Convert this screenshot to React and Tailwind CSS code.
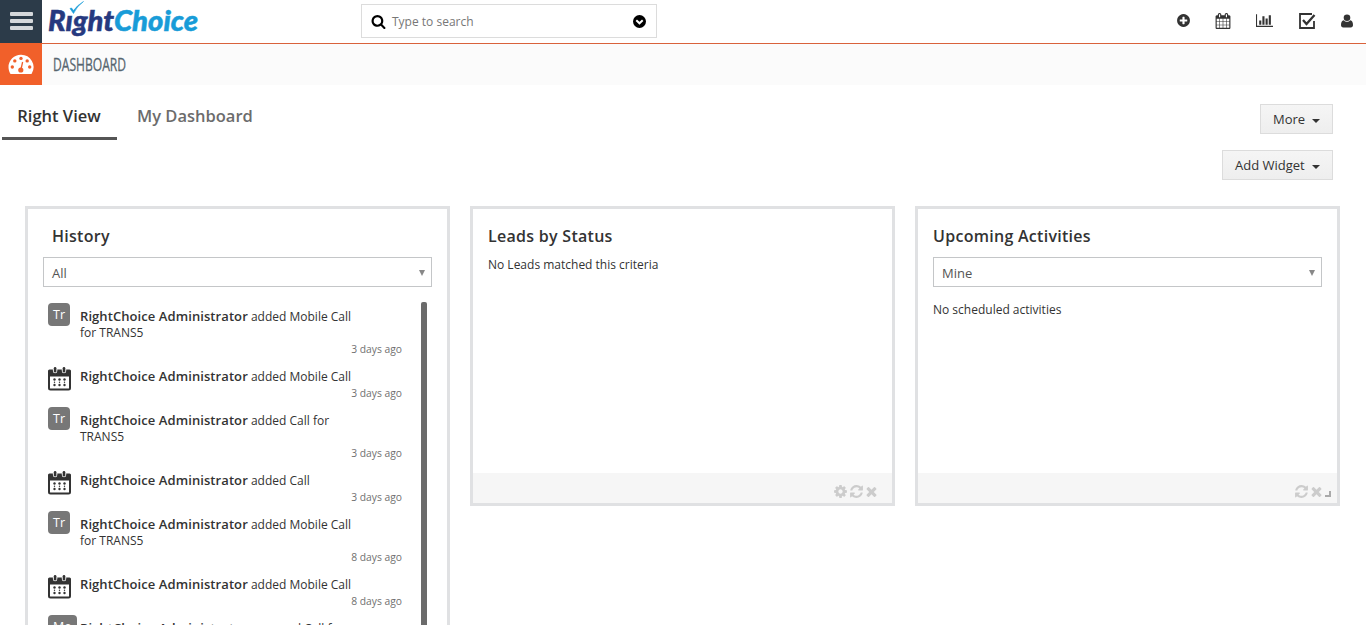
const P = {
  search: "M1216 832q0-185-131.5-316.5t-316.5-131.5-316.5 131.5-131.5 316.5 131.5 316.5 316.5 131.5 316.5-131.5 131.5-316.5zm512 832q0 52-38 90t-90 38q-54 0-90-38l-343-342q-179 124-399 124-143 0-273.5-55.5t-225-150-150-225-55.5-273.5 55.5-273.5 150-225 225-150 273.5-55.5 273.5 55.5 225 150 150 225 55.5 273.5q0 220-124 399l343 343q37 37 37 90z",
  calendar: "M192 1664h288v-288h-288v288zm352 0h320v-288h-320v288zm-352-352h288v-320h-288v320zm352 0h320v-320h-320v320zm-352-384h288v-288h-288v288zm736 736h320v-288h-320v288zm-384-736h320v-288h-320v288zm768 736h288v-288h-288v288zm-384-352h320v-320h-320v320zm-352-864v-288q0-13-9.5-22.5t-22.5-9.5h-64q-13 0-22.5 9.5t-9.5 22.5v288q0 13 9.5 22.5t22.5 9.5h64q13 0 22.5-9.5t9.5-22.5zm736 864h288v-320h-288v320zm-384-384h320v-288h-320v288zm384 0h288v-288h-288v288zm32-480v-288q0-13-9.5-22.5t-22.5-9.5h-64q-13 0-22.5 9.5t-9.5 22.5v288q0 13 9.5 22.5t22.5 9.5h64q13 0 22.5-9.5t9.5-22.5zm384-64v1280q0 52-38 90t-90 38h-1408q-52 0-90-38t-38-90v-1280q0-52 38-90t90-38h128v-96q0-66 47-113t113-47h64q66 0 113 47t47 113v96h384v-96q0-66 47-113t113-47h64q66 0 113 47t47 113v96h128q52 0 90 38t38 90z",
  chart: "M640 896v512h-256v-512h256zm384-512v1024h-256v-1024h256zm1024 1152v128h-2048v-1536h128v1408h1920zm-640-896v768h-256v-768h256zm384-384v1152h-256v-1152h256z",
  plus: "M1344 960v-128q0-26-19-45t-45-19h-256v-256q0-26-19-45t-45-19h-128q-26 0-45 19t-19 45v256h-256q-26 0-45 19t-19 45v128q0 26 19 45t45 19h256v256q0 26 19 45t45 19h128q26 0 45-19t19-45v-256h256q26 0 45-19t19-45zm320-64q0 209-103 385.5t-279.5 279.5-385.5 103-385.5-103-279.5-279.5-103-385.5 103-385.5 279.5-279.5 385.5-103 385.5 103 279.5 279.5 103 385.5z",
  cog: "M1152 896q0-106-75-181t-181-75-181 75-75 181 75 181 181 75 181-75 75-181zm512-109v222q0 12-8 23t-20 13l-185 28q-19 54-39 91 35 50 107 138 10 12 10 25t-9 23q-27 37-99 108t-94 71q-12 0-26-9l-138-108q-44 23-91 38-16 136-29 186-7 28-36 28h-222q-14 0-24.5-8.5t-11.5-21.5l-28-184q-49-16-90-37l-141 107q-10 9-25 9-14 0-25-11-126-114-165-168-7-10-7-23 0-12 8-23 15-21 51-66.5t54-70.5q-27-50-41-99l-183-27q-13-2-21-12.5t-8-23.5v-222q0-12 8-23t19-13l186-28q14-46 39-92-40-57-107-138-10-12-10-24 0-10 9-23 26-36 98.5-107.5t94.5-71.5q13 0 26 10l138 107q44-23 91-38 16-136 29-186 7-28 36-28h222q14 0 24.5 8.5t11.5 21.5l28 184q49 16 90 37l142-107q9-9 24-9 13 0 25 10 129 119 165 170 7 8 7 22 0 12-8 23-15 21-51 66.5t-54 70.5q26 50 41 98l183 28q13 2 21 12.5t8 23.5z",
  refresh: "M1639 1056q0 5-1 7-64 268-268 434.5t-478 166.5q-146 0-282.5-55t-243.5-157l-129 129q-19 19-45 19t-45-19-19-45v-448q0-26 19-45t45-19h448q26 0 45 19t19 45-19 45l-137 137q71 66 161 102t187 36q134 0 250-65t186-179q11-17 53-117 8-23 30-23h192q13 0 22.5 9.5t9.5 22.5zm25-800v448q0 26-19 45t-45 19h-448q-26 0-45-19t-19-45 19-45l138-138q-148-137-349-137-134 0-250 65t-186 179q-11 17-53 117-8 23-30 23h-199q-13 0-22.5-9.5t-9.5-22.5v-7q65-268 270-434.5t480-166.5q146 0 284 55.5t245 156.5l130-129q19-19 45-19t45 19 19 45z",
  times: "M1490 1322q0 40-28 68l-136 136q-28 28-68 28t-68-28l-294-294-294 294q-28 28-68 28t-68-28l-136-136q-28-28-28-68t28-68l294-294-294-294q-28-28-28-68t28-68l136-136q28-28 68-28t68 28l294 294 294-294q28-28 68-28t68 28l136 136q28 28 28 68t-28 68l-294 294 294 294q28 28 28 68z",
};

function Icon({ name, className, box = "0 0 1792 1792" }) {
  return (
    <svg viewBox={box} className={className} fill="currentColor">
      <path d={P[name]} />
    </svg>
  );
}

function Logo() {
  return (
    <svg width="152" height="42" viewBox="0 0 152 42" className="ml-[6px] shrink-0 overflow-visible" fontFamily="Lato, sans-serif" fontWeight="900" fontStyle="italic" fontSize="29">
      <text x="0" y="31" textLength="66" lengthAdjust="spacingAndGlyphs" fill="#26397f" stroke="#26397f" strokeWidth=".5">Rıght</text>
      <text x="66" y="31" textLength="84" lengthAdjust="spacingAndGlyphs" fill="#189cd8" stroke="#189cd8" strokeWidth=".5">Choice</text>
      <path d="M22 8.500l3.500 5Q29 6 35.500 1.500 29.500 5 25.500 10.500L23.500 8z" fill="#189cd8" stroke="#189cd8" strokeWidth=".6" />
    </svg>
  );
}

function Gauge() {
  return (
    <svg width="26" height="21" viewBox="0 0 26 21" className="shrink-0">
      <path d="M13 .7A12.4 12.4 0 0 0 .5 13.100c0 2.300.6 4.500 1.700 6.300.3.5.6.6 1.100.6h19.400c.5 0 .8-.1 1.100-.6A12.400 12.400 0 0 0 13 .7z" fill="#fff" />
      <g fill="#f1602a">
        <circle cx="4.300" cy="13" r="1.700" />
        <circle cx="6.800" cy="6.900" r="1.700" />
        <circle cx="13" cy="4.400" r="1.700" />
        <circle cx="19.200" cy="6.900" r="1.700" />
        <circle cx="21.700" cy="13" r="1.700" />
        <circle cx="12.800" cy="16" r="2.600" />
      </g>
      <path d="M13 15.500l1.600-7.500" stroke="#f1602a" strokeWidth="1.300" />
    </svg>
  );
}

function CalBadge() {
  return (
    <svg width="23" height="24" viewBox="0 0 23 24" className="mt-1 block">
      <rect x="1" y="4" width="21" height="18.500" rx="1.500" fill="#fff" stroke="#333" strokeWidth="2" />
      <path d="M1.500 2.500h20q1.500 0 1.500 1.500V9.500H0V4Q0 2.500 1.500 2.500z" fill="#333" />
      <path d="M4.900 0h4.400v4a2.200 2.200 0 0 1-4.400 0zM13.800 0h4.400v4a2.200 2.200 0 0 1-4.400 0z" fill="#fff" />
      <rect x="5.800" y="0" width="2.600" height="5.500" rx="1.300" fill="#333" />
      <rect x="14.700" y="0" width="2.600" height="5.500" rx="1.300" fill="#333" />
      <g fill="#333">
        {[6.500, 11.500, 16.500].map((x) => [12.500, 18].map((y) => <circle key={x + "-" + y} cx={x} cy={y} r="1.200" />))}
        {[6.500, 11.500, 16.500].map((x) => <circle key={x} cx={x} cy="15.300" r=".7" />)}
      </g>
    </svg>
  );
}

function Select({ value, className }) {
  return (
    <div className={"flex h-[30px] items-center justify-between border border-[#c4c6c8] bg-white pr-[6px] pl-2 text-[13px] text-[#555] " + className}>
      <span className="relative top-[2px]">{value}</span>
      <svg width="6" height="6" viewBox="0 0 6 6" className="relative top-px" fill="#888"><path d="M0 0h6L3 6z" /></svg>
    </div>
  );
}

function Caret() {
  return <svg width="8" height="4" viewBox="0 0 8 4" className="relative top-px" fill="#333"><path d="M0 0h8L4 4z" /></svg>;
}

function Button({ label, className }) {
  return (
    <button className={"flex h-[30px] items-center justify-between border border-[#dcdcdc] bg-linear-to-b from-[#f5f5f5] to-[#eeeeee] px-3 pt-px text-[13px] text-[#333] " + className}>
      {label}
      <Caret />
    </button>
  );
}

const items = [
  { kind: "Tr", a: "added Mobile Call", b: "for TRANS5", ago: "3 days ago" },
  { kind: "cal", a: "added Mobile Call", ago: "3 days ago" },
  { kind: "Tr", a: "added Call for", b: "TRANS5", ago: "3 days ago" },
  { kind: "cal", a: "added Call", ago: "3 days ago" },
  { kind: "Tr", a: "added Mobile Call", b: "for TRANS5", ago: "8 days ago" },
  { kind: "cal", a: "added Mobile Call", ago: "8 days ago" },
  { kind: "Mo", a: "removed Call for", ago: "" },
];

function HistoryItem({ item }) {
  return (
    <div className={"flex shrink-0 " + (item.b ? "h-[60px]" : "h-11")}>
      <div className="w-[32px] shrink-0">
        {item.kind === "cal" ? <CalBadge /> : (
          <span className="flex h-[23px] w-fit min-w-[22px] items-center justify-center rounded-[4px] bg-[#777] px-[5px] pt-px text-[12.500px] text-white">{item.kind}</span>
        )}
      </div>
      <div className="w-[322px] text-[12px] leading-4 text-[#333]">
        <div className="mt-[5px] whitespace-nowrap"><span className="text-[13px] font-semibold tracking-[0.080px]">RightChoice Administrator</span> {item.a}</div>
        {item.b && <div>{item.b}</div>}
        <div className="text-right text-[10.300px] text-[#707070]">{item.ago}</div>
      </div>
    </div>
  );
}

export default function App() {
  return (
    <div className="h-[625px] w-[1366px] overflow-hidden bg-white font-['Open_Sans',sans-serif] text-[#333]">
      <header className="flex h-11 border-b border-[#d9623b]">
        <div className="flex h-[43px] w-[42px] shrink-0 flex-col items-center justify-center gap-[3px] bg-[#2c3b49] pb-px">
          <i className="h-[4px] w-[23px] rounded-[1px] bg-[#d5d8db]" />
          <i className="h-[4px] w-[23px] rounded-[1px] bg-[#d5d8db]" />
          <i className="h-[4px] w-[23px] rounded-[1px] bg-[#d5d8db]" />
        </div>
        <Logo />
        <div className="mt-1 ml-[161px] flex h-[34px] w-[296px] items-center border border-[#dcdcdc] pl-[9px]">
          <Icon name="search" className="size-[15px] text-black" />
          <span className="mt-[2px] ml-[6px] text-[12px] text-[#777]">Type to search</span>
          <svg width="13" height="13" viewBox="0 0 13 13" className="mr-[10px] ml-auto">
            <circle cx="6.500" cy="6.500" r="6.500" fill="#000" />
            <path d="M3.300 5.200L6.500 8.300 9.700 5.200" fill="none" stroke="#fff" strokeWidth="2" />
          </svg>
        </div>
        <div className="ml-auto flex items-center pb-[2px] text-[#333]">
          <Icon name="plus" className="mr-[24px] size-[15px]" />
          <Icon name="calendar" className="mr-[25px] size-[16px]" />
          <Icon name="chart" box="0 0 2048 1792" className="mr-[26px] h-[15px] w-[17px]" />
          <svg width="17" height="16" viewBox="0 0 17 16" className="mr-[25px]" fill="none" stroke="#333">
            <path d="M15 8v7H1V1h12" strokeWidth="1.800" />
            <path d="M4 7l3.500 4L15.500 2" strokeWidth="2.300" />
          </svg>
          <svg width="12" height="14" viewBox="0 0 12 14" className="mr-[13px]" fill="#333">
            <circle cx="6" cy="3.700" r="3.300" />
            <path d="M2.800 6.300C.8 6.600 0 8.500 0 11c0 1.500.8 2.500 2.300 2.500h7.400c1.500 0 2.300-1 2.300-2.500 0-2.500-.8-4.400-2.800-4.700C8.300 7.300 7.200 7.800 6 7.800s-2.300-.5-3.200-1.500z" />
          </svg>
        </div>
      </header>
      <div className="flex h-[41px] items-center bg-[#fbfbfb]">
        <div className="-mt-px flex h-[42px] w-[42px] items-center justify-center bg-[#f1602a]"><Gauge /></div>
        <svg width="76" height="28" viewBox="0 0 76 28" className="ml-[10px] overflow-visible">
          <text x="1" y="19.500" textLength="73" lengthAdjust="spacingAndGlyphs" fontFamily="'Open Sans', sans-serif" fontSize="18.500" fill="#56656f" stroke="#56656f" strokeWidth=".3">DASHBOARD</text>
        </svg>
      </div>
      <div className="flex h-[122px] justify-between">
        <nav className="ml-[2px] flex h-[55px] text-[16.500px] leading-[26px] font-semibold">
          <div className="w-[115px] border-b-[3px] border-[#555] pt-[18px] pr-px text-center text-[#333]">Right View</div>
          <div className="ml-[20px] pt-[18px] text-[#6c6c6c]">My Dashboard</div>
        </nav>
        <div className="mt-[19px] mr-[33px] flex flex-col items-end gap-4">
          <Button label="More" className="w-[73px]" />
          <Button label="Add Widget" className="w-[111px]" />
        </div>
      </div>
      <main className="-mt-px flex items-start gap-5 pl-[25px]">
        <section className="h-[430px] w-[425px] border-[3px] border-[#e0e1e3] px-[15px] pt-[14px]">
          <h2 className="pl-[9px] text-[16px] leading-[26px] font-semibold tracking-[0.280px]">History</h2>
          <Select value="All" className="mt-2 w-[389px]" />
          <div className="mt-[15px] flex h-[340px] overflow-hidden">
            <div className="mt-px flex w-[378px] shrink-0 flex-col pl-[5px]">
              {items.map((item, i) => <HistoryItem key={i} item={item} />)}
            </div>
            <div className="h-[340px] w-[6px] rounded-t-[2px] bg-[#6b6b6b]" />
          </div>
        </section>
        <section className="flex h-[300px] w-[425px] flex-col border-[3px] border-[#e0e1e3]">
          <h2 className="mt-[14px] ml-[15px] text-[16px] leading-[26px] font-semibold tracking-[0.280px]">Leads by Status</h2>
          <p className="mt-[8px] ml-[15px] text-[12px] leading-4">No Leads matched this criteria</p>
          <div className="mt-auto flex h-[30px] items-center justify-end bg-[#f6f6f6] pt-[6px] pr-[13px] text-[#ccc]">
            <Icon name="cog" className="size-[15px]" />
            <Icon name="refresh" className="ml-px size-[15px]" />
            <Icon name="times" className="size-[15px]" />
          </div>
        </section>
        <section className="flex h-[300px] w-[425px] flex-col border-[3px] border-[#e0e1e3]">
          <h2 className="mt-[14px] ml-[15px] text-[16px] leading-[26px] font-semibold tracking-[0.280px]">Upcoming Activities</h2>
          <Select value="Mine" className="mt-2 ml-[15px] w-[389px]" />
          <p className="mt-[15px] ml-[15px] text-[12px] leading-4">No scheduled activities</p>
          <div className="mt-auto flex h-[30px] items-center justify-end bg-[#f6f6f6] pt-[6px] pr-[6px] text-[#ccc]">
            <Icon name="refresh" className="size-[15px]" />
            <Icon name="times" className="size-[15px]" />
            <i className="mt-[6px] ml-px size-[6px] border-r-2 border-b-2 border-[#aaa]" />
          </div>
        </section>
      </main>
    </div>
  );
}
